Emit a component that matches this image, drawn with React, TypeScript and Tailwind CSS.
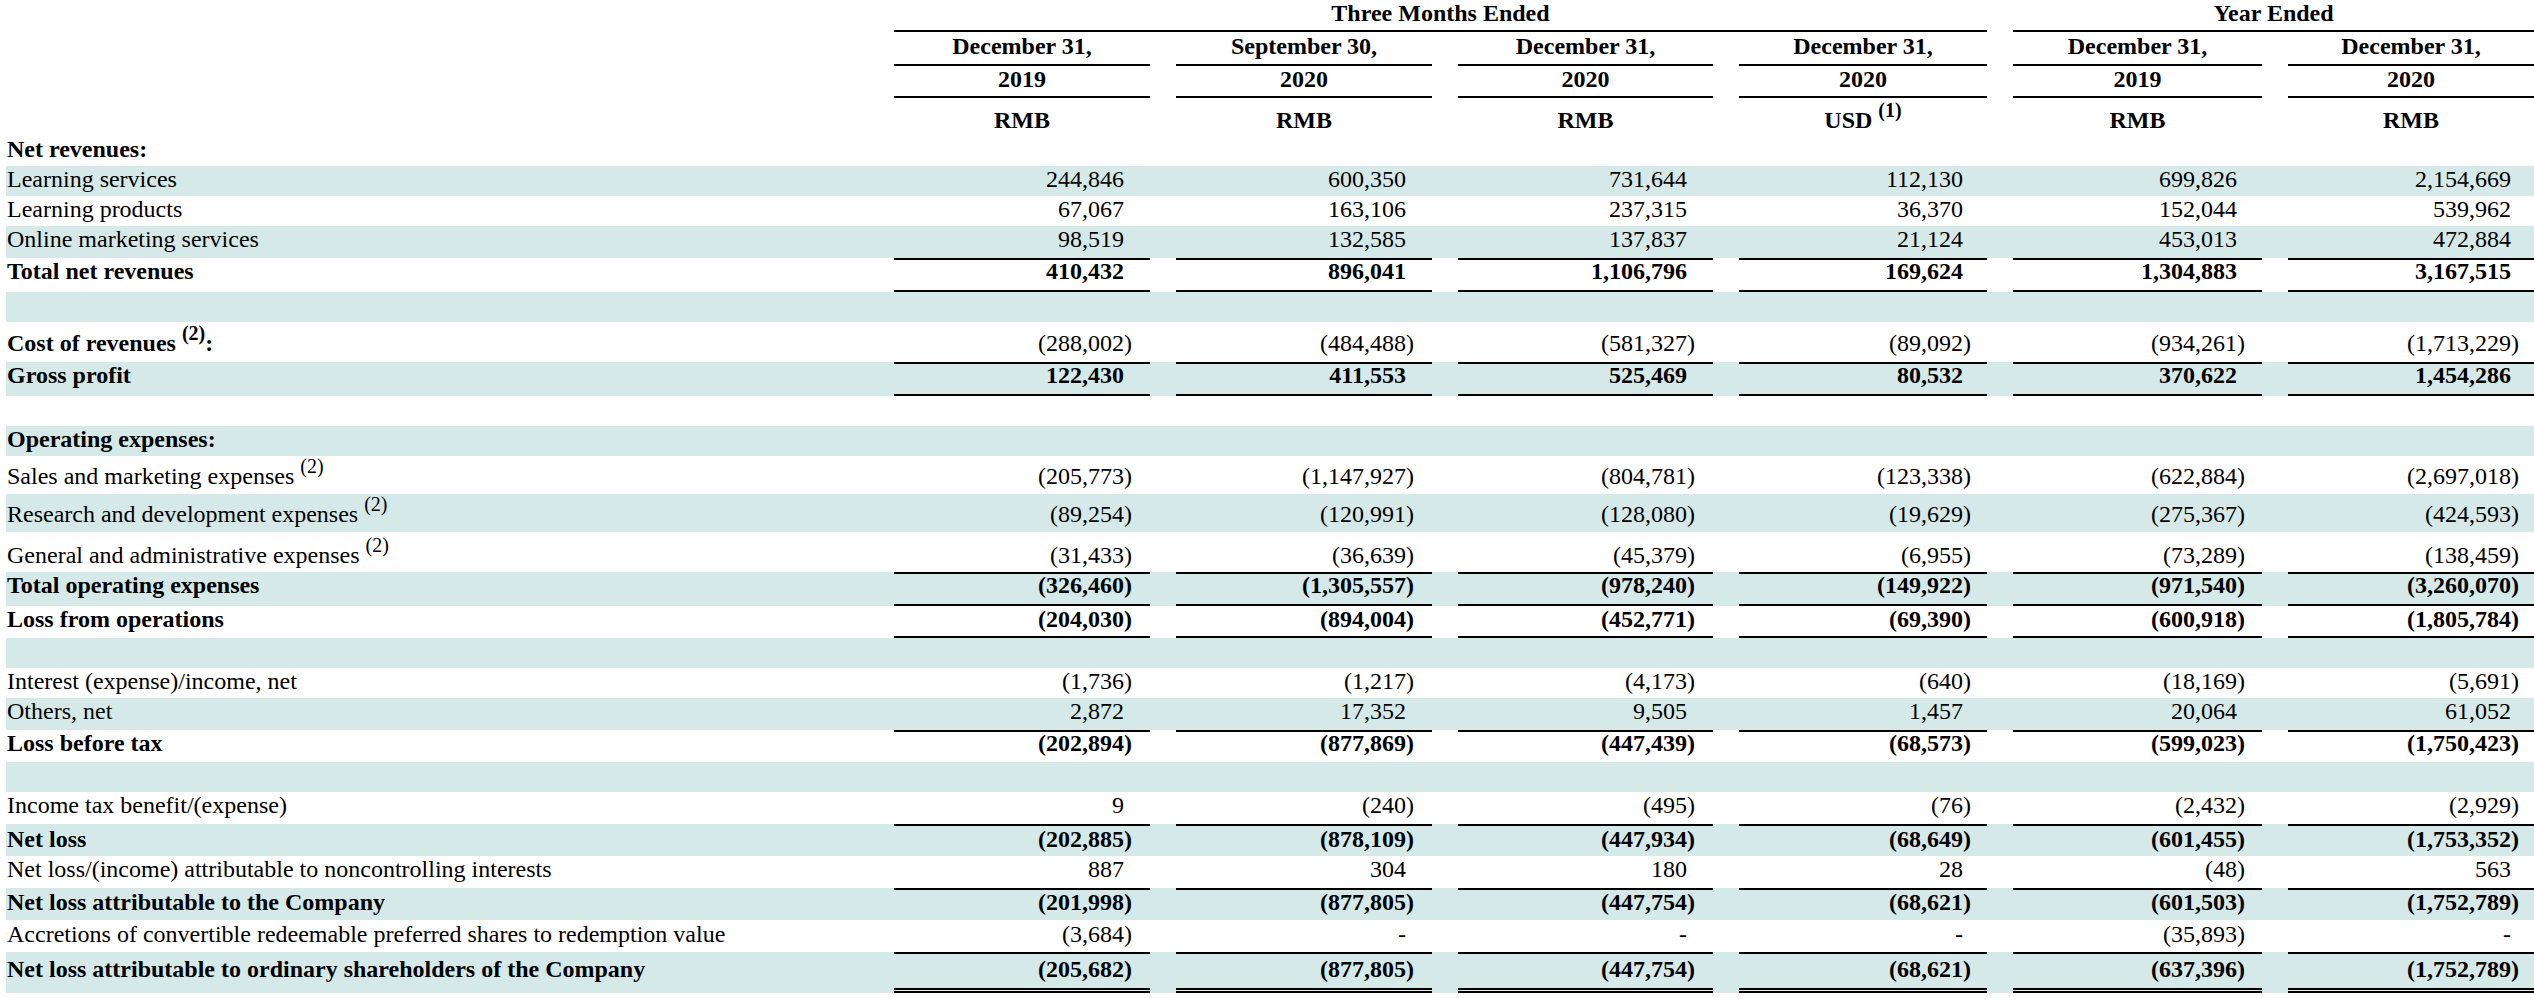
import React from "react";

const GRID =
  "grid grid-cols-[862px_256px_256px_255px_248px_249px_246px] gap-x-[26px]";

const posPr = ["pr-[26px]", "pr-[26px]", "pr-[26px]", "pr-[24px]", "pr-[25px]", "pr-[23px]"];
const negPr = ["pr-[18px]", "pr-[18px]", "pr-[18px]", "pr-[16px]", "pr-[17px]", "pr-[15px]"];

type Row = {
  label?: React.ReactNode;
  vals?: string[];
  bold?: boolean;
  labelBold?: boolean;
  bg?: boolean;
  top?: boolean;
  bottom?: "single" | "double";
  h: string;
  pt?: string;
};

const Sup = ({ children }: { children: React.ReactNode }) => (
  <sup className="text-[20px] -top-[11px]">{children}</sup>
);

const rows: Row[] = [
  { label: "Net revenues:", labelBold: true, h: "h-[30px]" },
  {
    label: "Learning services",
    vals: ["244,846", "600,350", "731,644", "112,130", "699,826", "2,154,669"],
    bg: true,
    h: "h-[30px]",
  },
  {
    label: "Learning products",
    vals: ["67,067", "163,106", "237,315", "36,370", "152,044", "539,962"],
    h: "h-[30px]",
  },
  {
    label: "Online marketing services",
    vals: ["98,519", "132,585", "137,837", "21,124", "453,013", "472,884"],
    bg: true,
    h: "h-[32px]",
  },
  {
    label: "Total net revenues",
    vals: ["410,432", "896,041", "1,106,796", "169,624", "1,304,883", "3,167,515"],
    bold: true,
    top: true,
    bottom: "single",
    h: "h-[34px]",
  },
  { bg: true, h: "h-[30px]" },
  {
    label: (
      <>
        Cost of revenues <Sup>(2)</Sup>:
      </>
    ),
    labelBold: true,
    vals: ["(288,002)", "(484,488)", "(581,327)", "(89,092)", "(934,261)", "(1,713,229)"],
    h: "h-[40px]",
    pt: "pt-[8px]",
  },
  {
    label: "Gross profit",
    vals: ["122,430", "411,553", "525,469", "80,532", "370,622", "1,454,286"],
    bold: true,
    bg: true,
    top: true,
    bottom: "single",
    h: "h-[34px]",
  },
  { h: "h-[30px]" },
  { label: "Operating expenses:", labelBold: true, bg: true, h: "h-[30px]" },
  {
    label: (
      <>
        Sales and marketing expenses <Sup>(2)</Sup>
      </>
    ),
    vals: ["(205,773)", "(1,147,927)", "(804,781)", "(123,338)", "(622,884)", "(2,697,018)"],
    h: "h-[38px]",
    pt: "pt-[7px]",
  },
  {
    label: (
      <>
        Research and development expenses <Sup>(2)</Sup>
      </>
    ),
    vals: ["(89,254)", "(120,991)", "(128,080)", "(19,629)", "(275,367)", "(424,593)"],
    bg: true,
    h: "h-[38px]",
    pt: "pt-[7px]",
  },
  {
    label: (
      <>
        General and administrative expenses <Sup>(2)</Sup>
      </>
    ),
    vals: ["(31,433)", "(36,639)", "(45,379)", "(6,955)", "(73,289)", "(138,459)"],
    h: "h-[40px]",
    pt: "pt-[10px]",
  },
  {
    label: "Total operating expenses",
    vals: ["(326,460)", "(1,305,557)", "(978,240)", "(149,922)", "(971,540)", "(3,260,070)"],
    bold: true,
    bg: true,
    top: true,
    bottom: "single",
    h: "h-[34px]",
  },
  {
    label: "Loss from operations",
    vals: ["(204,030)", "(894,004)", "(452,771)", "(69,390)", "(600,918)", "(1,805,784)"],
    bold: true,
    bottom: "single",
    h: "h-[32px]",
  },
  { bg: true, h: "h-[30px]" },
  {
    label: "Interest (expense)/income, net",
    vals: ["(1,736)", "(1,217)", "(4,173)", "(640)", "(18,169)", "(5,691)"],
    h: "h-[30px]",
  },
  {
    label: "Others, net",
    vals: ["2,872", "17,352", "9,505", "1,457", "20,064", "61,052"],
    bg: true,
    h: "h-[32px]",
  },
  {
    label: "Loss before tax",
    vals: ["(202,894)", "(877,869)", "(447,439)", "(68,573)", "(599,023)", "(1,750,423)"],
    bold: true,
    top: true,
    h: "h-[32px]",
  },
  { bg: true, h: "h-[30px]" },
  {
    label: "Income tax benefit/(expense)",
    vals: ["9", "(240)", "(495)", "(76)", "(2,432)", "(2,929)"],
    h: "h-[32px]",
  },
  {
    label: "Net loss",
    vals: ["(202,885)", "(878,109)", "(447,934)", "(68,649)", "(601,455)", "(1,753,352)"],
    bold: true,
    bg: true,
    top: true,
    h: "h-[32px]",
    pt: "pt-[2px]",
  },
  {
    label: "Net loss/(income) attributable to noncontrolling interests",
    vals: ["887", "304", "180", "28", "(48)", "563"],
    h: "h-[32px]",
  },
  {
    label: "Net loss attributable to the Company",
    vals: ["(201,998)", "(877,805)", "(447,754)", "(68,621)", "(601,503)", "(1,752,789)"],
    bold: true,
    bg: true,
    top: true,
    h: "h-[32px]",
    pt: "pt-[1px]",
  },
  {
    label: "Accretions of convertible redeemable preferred shares to redemption value",
    vals: ["(3,684)", "-", "-", "-", "(35,893)", "-"],
    h: "h-[32px]",
    pt: "pt-[1px]",
  },
  {
    label: "Net loss attributable to ordinary shareholders of the Company",
    vals: ["(205,682)", "(877,805)", "(447,754)", "(68,621)", "(637,396)", "(1,752,789)"],
    bold: true,
    bg: true,
    top: true,
    bottom: "double",
    h: "h-[41px]",
    pt: "pt-[4px]",
  },
];

function DataRow({ r }: { r: Row }) {
  const leading = r.top ? "leading-[23px]" : "leading-[27px]";
  const pt = r.pt ?? "";
  const rowCls = [GRID, r.h, r.bg ? "bg-[#d6e9e9]" : "", r.bold ? "font-bold" : ""].join(" ");
  const labelCls = [
    "pl-[1px] whitespace-nowrap",
    leading,
    pt,
    r.top ? "border-t-2 border-transparent" : "",
    r.labelBold ? "font-bold" : "",
  ].join(" ");
  return (
    <div className={rowCls}>
      <div className={labelCls}>{r.label}</div>
      {[0, 1, 2, 3, 4, 5].map((i) => {
        const v = r.vals ? r.vals[i] : "";
        const neg = v.startsWith("(");
        const cls = [
          "text-right whitespace-nowrap",
          leading,
          pt,
          neg ? negPr[i] : posPr[i],
          r.top ? "border-t-2 border-t-black" : "",
          r.bottom === "single" ? "border-b-2 border-b-black" : "",
          r.bottom === "double" ? "border-b-[5px] [border-bottom-style:double] border-b-black" : "",
        ].join(" ");
        return (
          <div key={i} className={cls}>
            {v}
          </div>
        );
      })}
    </div>
  );
}

const colHeads = [
  ["December 31,", "2019", "RMB"],
  ["September 30,", "2020", "RMB"],
  ["December 31,", "2020", "RMB"],
  ["December 31,", "2020", "USD"],
  ["December 31,", "2019", "RMB"],
  ["December 31,", "2020", "RMB"],
];

export default function App() {
  return (
    <div className="w-[2534px] min-h-[998px] bg-white pl-[6px] font-['Liberation_Serif','Times_New_Roman',serif] text-[24px] text-black">
      {/* header row A */}
      <div className={`${GRID} h-[32px] leading-[27px] font-bold`}>
        <div />
        <div className="col-span-4 text-center border-b-2 border-b-black">Three Months Ended</div>
        <div className="col-span-2 text-center border-b-2 border-b-black">Year Ended</div>
      </div>
      {/* header row B */}
      <div className={`${GRID} h-[34px] leading-[27px] font-bold`}>
        <div />
        {colHeads.map((c, i) => (
          <div key={i} className="text-center pt-[1px] border-b-2 border-b-black whitespace-nowrap">
            {c[0]}
          </div>
        ))}
      </div>
      {/* header row C */}
      <div className={`${GRID} h-[32px] leading-[27px] font-bold`}>
        <div />
        {colHeads.map((c, i) => (
          <div key={i} className="text-center border-b-2 border-b-black">
            {c[1]}
          </div>
        ))}
      </div>
      {/* header row D */}
      <div className={`${GRID} h-[38px] leading-[27px] font-bold`}>
        <div />
        {colHeads.map((c, i) => (
          <div key={i} className="text-center pt-[9px] whitespace-nowrap">
            {c[2]}
            {i === 3 ? (
              <>
                {" "}
                <Sup>(1)</Sup>
              </>
            ) : null}
          </div>
        ))}
      </div>
      {rows.map((r, i) => (
        <DataRow key={i} r={r} />
      ))}
    </div>
  );
}
